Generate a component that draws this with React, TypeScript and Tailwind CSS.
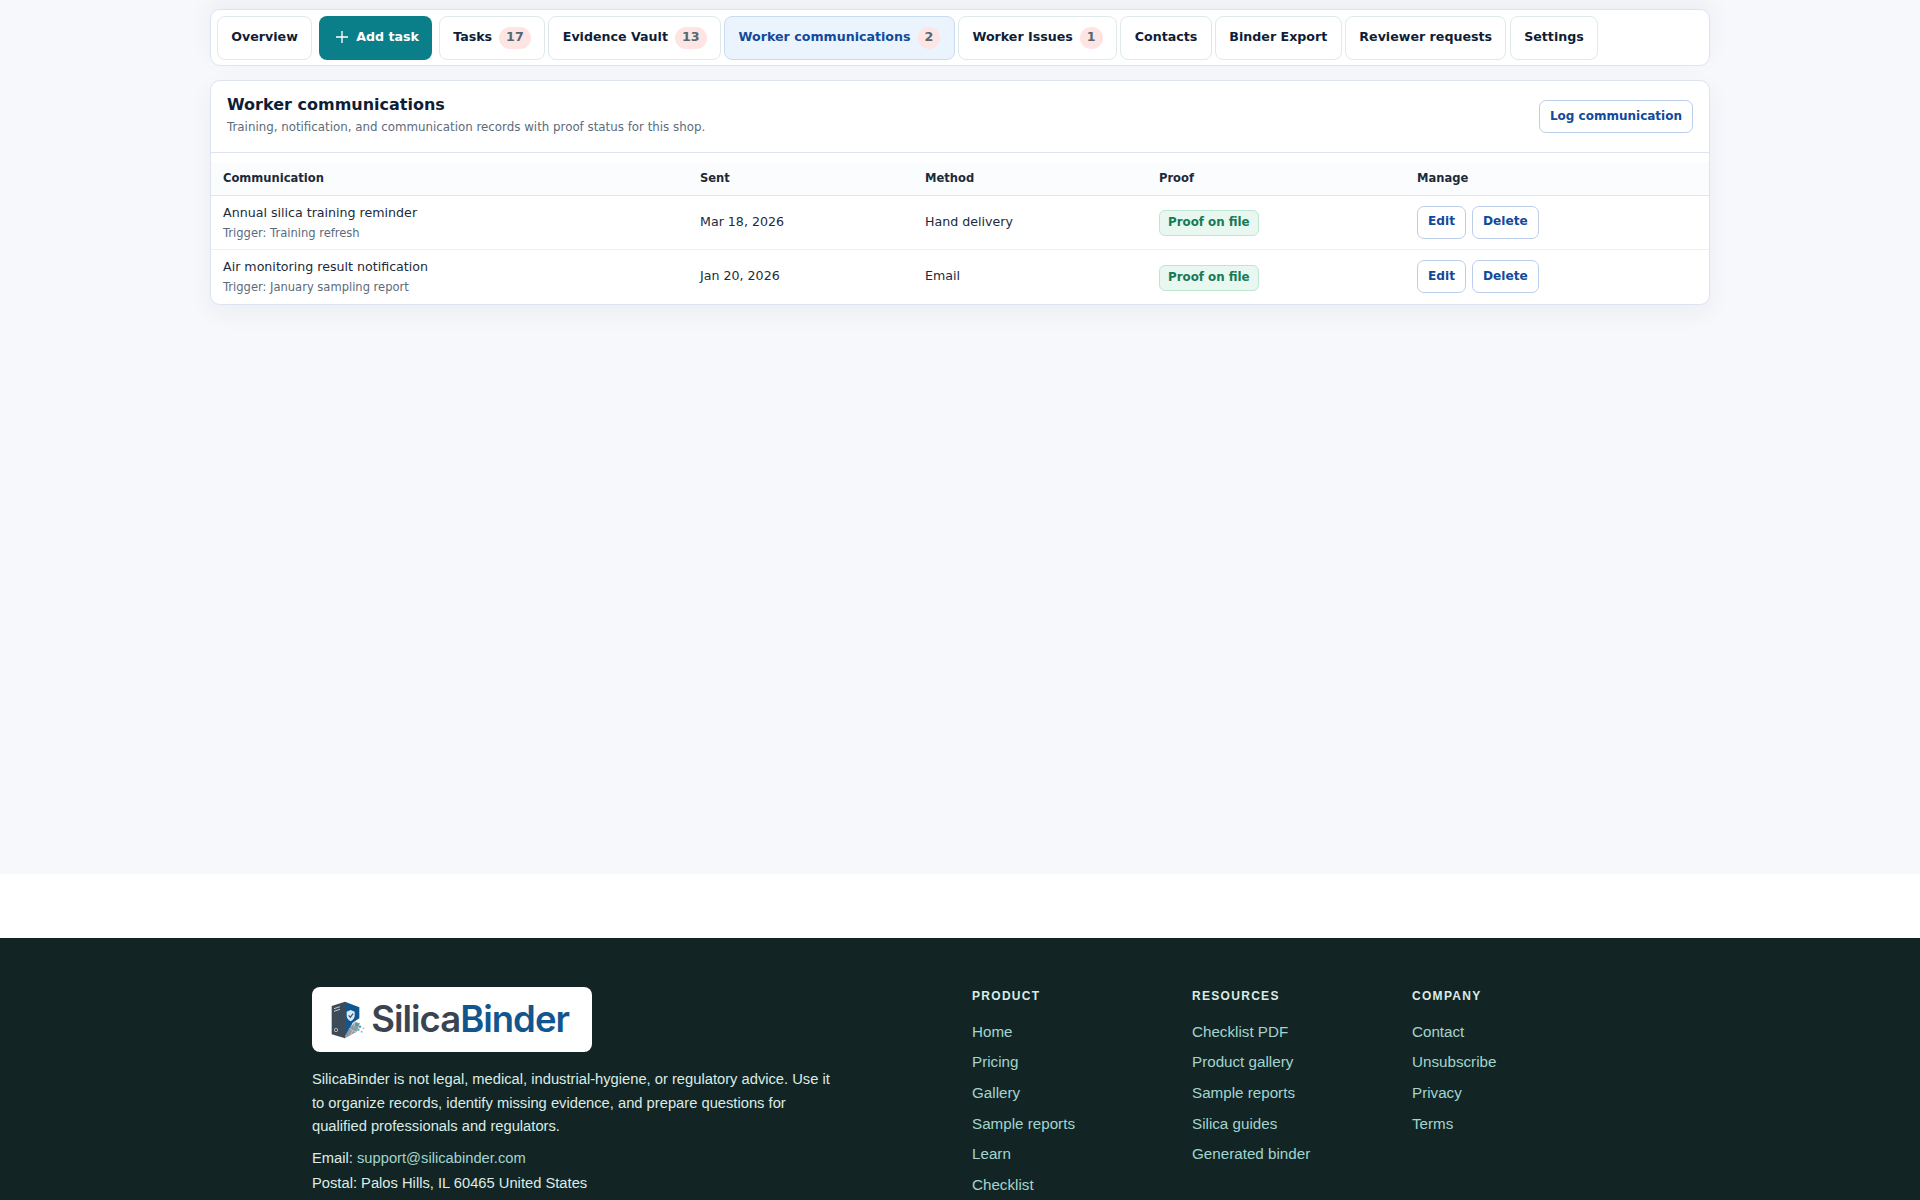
import React from "react";

function Tab({ label, badge, active }: { label: string; badge?: string; active?: boolean }) {
  return (
    <a
      className={
        "flex h-[44px] items-center gap-[7px] rounded-[8px] border px-[13.3px] pb-[1px] text-[12.64px] font-bold " +
        (active ? "border-[#c9dcef] bg-[#ebf4fd] text-[#124a9a]" : "border-[#dfe9ec] bg-white text-[#0f1d36]")
      }
    >
      <span>{label}</span>
      {badge && (
        <span className="mt-[1px] flex h-[22px] min-w-[22px] items-center justify-center rounded-full bg-[#fee4e2] px-[7px] text-[#4f6a72]">
          {badge}
        </span>
      )}
    </a>
  );
}

function Logo() {
  return (
    <div className="flex h-[65px] w-[280px] items-center rounded-[8px] bg-white pl-[18px]">
      <svg viewBox="60 40 110 120" className="h-[40px] w-[36.7px] shrink-0">
        <path d="M65 58 L105 45 L105 155 L65 143 Z" fill="#3d4a57" />
        <path d="M105 45 L148 62 L148 95 L128 108 L112 140 L105 150 Z" fill="#12568f" />
        <path d="M105 155 L105 148 L118 125 L135 105 L150 110 L140 135 Z" fill="#8f9aa3" />
        <path d="M118 125 L128 132 L140 135 M128 132 L122 145 M135 105 L132 120" stroke="#d5dbe0" strokeWidth="2" fill="none" />
        <path d="M122 70 L134 75 V88 Q133 98 122 104 Q111 98 110 88 V75 Z" fill="#dfeaf5" />
        <path d="M116 86 L121 92 L129 81" stroke="#12568f" strokeWidth="3.5" fill="none" />
        <path d="M72 66 L90 60 M72 74 L90 68" stroke="#dfe5ea" strokeWidth="2.5" />
        <circle cx="78" cy="130" r="5" fill="none" stroke="#dfe5ea" strokeWidth="2" />
        <circle cx="140" cy="114" r="4" fill="#2ba6b5" />
        <circle cx="150" cy="120" r="3.5" fill="#2ba6b5" />
        <circle cx="145" cy="129" r="4" fill="#5db9c4" />
        <circle cx="160" cy="125" r="2.5" fill="#9fb4bf" />
        <circle cx="155" cy="135" r="3" fill="#9fb4bf" />
      </svg>
      <span className="ml-[4.5px] font-['Inter'] text-[36.5px] font-semibold leading-none tracking-[-1px]">
        <span className="text-[#3a4450]">Silica</span>
        <span className="text-[#12568f]">Binder</span>
      </span>
    </div>
  );
}

function Row({ title, sub, sent, method, tall }: { title: string; sub: string; sent: string; method: string; tall?: boolean }) {
  return (
    <tr className={(tall ? "h-[55px]" : "h-[54px]") + " border-t border-[#edf1f6] first:border-t-0"}>
      <td className="px-[12px] align-middle">
        <div className="leading-[18px] text-[#1c2a3a]">{title}</div>
        <div className="mt-[3px] text-[11.52px] leading-[16px] text-[#5c6b7c]">{sub}</div>
      </td>
      <td className="px-[12px] text-[#1c2a3a]">{sent}</td>
      <td className="px-[12px] text-[#1c2a3a]">{method}</td>
      <td className="px-[12px]">
        <span className="mt-[2px] inline-block rounded-[6px] border border-[#bfe5d3] bg-[#e8f7ef] px-[8px] py-[3px] text-[11.84px] font-bold text-[#157a55]">
          Proof on file
        </span>
      </td>
      <td className="px-[12px]">
        <div className="flex gap-[6px]">
          <button className="h-[33px] rounded-[7px] border border-[#bccdea] bg-white px-[10px] pb-[1px] text-[12.16px] font-bold text-[#114a9c]">Edit</button>
          <button className="h-[33px] rounded-[7px] border border-[#bccdea] bg-white px-[10px] pb-[1px] text-[12.16px] font-bold text-[#114a9c]">Delete</button>
        </div>
      </td>
    </tr>
  );
}

function FootCol({ title, links }: { title: string; links: string[] }) {
  return (
    <div className="w-[220px]">
      <div className="text-[12px] font-bold leading-[18px] tracking-[1.3px] text-[#dcebe6]">{title}</div>
      <ul className="mt-[11.8px] flex flex-col">
        {links.map((l) => (
          <li key={l} className="text-[15.2px] leading-[30.6px] text-[#a3d4cf]">{l}</li>
        ))}
      </ul>
    </div>
  );
}

export default function App() {
  return (
    <div className="flex h-[1200px] flex-col overflow-hidden bg-white font-['DejaVu_Sans',sans-serif]">
      <main className="h-[874px] shrink-0 bg-[#f7f8fc] pt-[9px]">
        <div className="mx-auto w-[1500px]">
          <nav className="flex h-[57px] items-center gap-[3.5px] rounded-[10px] border border-[#dde4ef] bg-white px-[6px] shadow-[0_-8px_24px_rgba(15,30,60,0.05)]">
            <Tab label="Overview" />
            <a className="mx-[3.5px] flex h-[44px] items-center gap-[5px] rounded-[8px] bg-[#0a7f8a] pb-[1px] pl-[14px] pr-[13px] text-[12.64px] font-bold text-white">
              <svg viewBox="0 0 24 24" className="h-[18px] w-[18px]" fill="none" stroke="currentColor" strokeWidth="1.8">
                <path d="M12 4v16M4 12h16" />
              </svg>
              Add task
            </a>
            <Tab label="Tasks" badge="17" />
            <Tab label="Evidence Vault" badge="13" />
            <Tab label="Worker communications" badge="2" active />
            <Tab label="Worker Issues" badge="1" />
            <Tab label="Contacts" />
            <Tab label="Binder Export" />
            <Tab label="Reviewer requests" />
            <Tab label="Settings" />
          </nav>
          <section className="mt-[14px] rounded-[10px] border border-[#dde4ef] bg-white shadow-[0_8px_24px_rgba(15,30,60,0.05)]">
            <div className="flex h-[72px] items-center justify-between border-b border-[#dde4ef] px-[16px]">
              <div className="pb-[3px]">
                <h2 className="text-[16px] font-bold leading-[22px] text-[#0f1d36]">Worker communications</h2>
                <p className="mt-[2.5px] text-[11.84px] leading-[18px] text-[#5c6b7c]">
                  Training, notification, and communication records with proof status for this shop.
                </p>
              </div>
              <button className="h-[33px] rounded-[7px] border border-[#bccdea] bg-white px-[10px] pb-[1px] text-[12px] font-bold text-[#114a9c]">
                Log communication
              </button>
            </div>
            <table className="mt-[9px] w-full table-fixed border-collapse text-[12.64px]">
              <colgroup>
                <col className="w-[477px]" />
                <col className="w-[225px]" />
                <col className="w-[234px]" />
                <col className="w-[258px]" />
                <col />
              </colgroup>
              <thead>
                <tr className="h-[33px] border-b border-[#dde4ef] bg-[#fbfcfe] text-left text-[11.52px] font-bold text-[#1c2a3a]">
                  <th className="px-[12px]">Communication</th>
                  <th className="px-[12px]">Sent</th>
                  <th className="px-[12px]">Method</th>
                  <th className="px-[12px]">Proof</th>
                  <th className="px-[12px]">Manage</th>
                </tr>
              </thead>
              <tbody>
                <Row title="Annual silica training reminder" sub="Trigger: Training refresh" sent="Mar 18, 2026" method="Hand delivery" />
                <Row title="Air monitoring result notification" sub="Trigger: January sampling report" sent="Jan 20, 2026" method="Email" tall />
              </tbody>
            </table>
          </section>
        </div>
      </main>
      <div className="h-[64px] shrink-0 bg-white" />
      <footer className="flex-1 bg-[#122524] pt-[49px] font-['Liberation_Sans',sans-serif]">
        <div className="ml-[312px] flex">
          <div className="w-[660px]">
            <Logo />
            <p className="mt-[16px] w-[530px] text-[14.72px] leading-[23.5px] text-[#dcebe6]">
              SilicaBinder is not legal, medical, industrial-hygiene, or regulatory advice. Use it to organize records, identify missing evidence, and prepare questions for qualified professionals and regulators.
            </p>
            <p className="mt-[7px] text-[14.72px] leading-[25.5px] text-[#dcebe6]">
              Email: <span className="text-[#a3d4cf]">support@silicabinder.com</span>
            </p>
            <p className="text-[14.72px] leading-[25.5px] text-[#dcebe6]">Postal: Palos Hills, IL 60465 United States</p>
          </div>
          <FootCol title="PRODUCT" links={["Home", "Pricing", "Gallery", "Sample reports", "Learn", "Checklist"]} />
          <FootCol title="RESOURCES" links={["Checklist PDF", "Product gallery", "Sample reports", "Silica guides", "Generated binder"]} />
          <FootCol title="COMPANY" links={["Contact", "Unsubscribe", "Privacy", "Terms"]} />
        </div>
      </footer>
    </div>
  );
}
